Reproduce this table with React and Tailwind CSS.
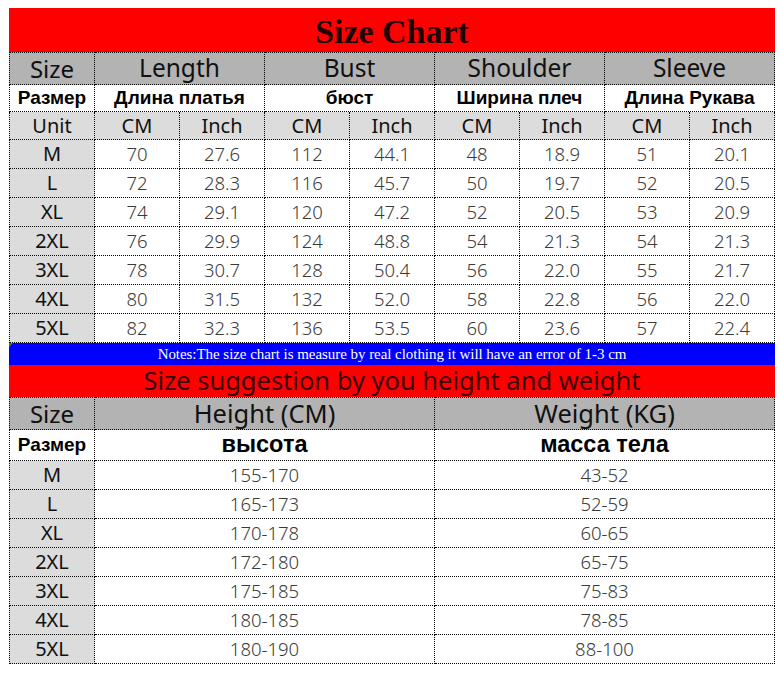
import React from "react";

const sizes = ["M", "L", "XL", "2XL", "3XL", "4XL", "5XL"];

const chart = [
    ["70", "27.6", "112", "44.1", "48", "18.9", "51", "20.1"],
    ["72", "28.3", "116", "45.7", "50", "19.7", "52", "20.5"],
    ["74", "29.1", "120", "47.2", "52", "20.5", "53", "20.9"],
    ["76", "29.9", "124", "48.8", "54", "21.3", "54", "21.3"],
    ["78", "30.7", "128", "50.4", "56", "22.0", "55", "21.7"],
    ["80", "31.5", "132", "52.0", "58", "22.8", "56", "22.0"],
    ["82", "32.3", "136", "53.5", "60", "23.6", "57", "22.4"],
];

const suggestion = [
    ["155-170", "43-52"],
    ["165-173", "52-59"],
    ["170-178", "60-65"],
    ["172-180", "65-75"],
    ["175-185", "75-83"],
    ["180-185", "78-85"],
    ["180-190", "88-100"],
];

const groups = [
    { en: "Length", ru: "Длина платья" },
    { en: "Bust", ru: "бюст" },
    { en: "Shoulder", ru: "Ширина плеч" },
    { en: "Sleeve", ru: "Длина Рукава" },
];

const cell = "flex items-center justify-center border-r border-b border-dotted border-black";
const sans = "font-['Noto_Sans',sans-serif]";
const arial = "font-['Liberation_Sans',Arial,sans-serif]";

const App = () => {
    return (
        <div className="w-[780px] h-[677px] bg-white pt-2 pl-[9px]">
            <div className="w-[766px]">
                {/* title */}
                <div className="h-[44px] bg-[#ff0000] flex items-center justify-center pt-[3px]">
                    <span className="font-['Liberation_Serif',serif] font-bold text-[34px] text-[#1e0000] leading-none">Size Chart</span>
                </div>

                {/* size chart */}
                <div className={`grid grid-cols-[86px_repeat(8,85px)] ${sans}`}>
                    <div className={`${cell} border-l border-t h-[33px] bg-[#b3b3b3] text-[24px] text-[#111]`}>Size</div>
                    {groups.map(g => (
                        <div key={g.en} className={`${cell} col-span-2 border-t h-[33px] bg-[#b3b3b3] text-[24.5px] text-[#111]`}>{g.en}</div>
                    ))}

                    <div className={`${cell} border-l h-[27px] bg-white ${arial} font-bold text-[19px] text-black`}>Размер</div>
                    {groups.map(g => (
                        <div key={g.ru} className={`${cell} col-span-2 h-[27px] bg-white ${arial} font-bold text-[19px] text-black`}>{g.ru}</div>
                    ))}

                    <div className={`${cell} border-l h-[28px] bg-[#dcdcdc] text-[20px] text-[#111]`}>Unit</div>
                    {groups.map(g => (
                        <React.Fragment key={g.en + "u"}>
                            <div className={`${cell} h-[28px] bg-[#dcdcdc] text-[20px] text-[#111]`}>CM</div>
                            <div className={`${cell} h-[28px] bg-[#dcdcdc] text-[20px] text-[#111]`}>Inch</div>
                        </React.Fragment>
                    ))}

                    {sizes.map((s, i) => (
                        <React.Fragment key={s}>
                            <div className={`${cell} border-l h-[29px] bg-[#dcdcdc] text-[20px] text-[#111]`}>{s}</div>
                            {chart[i].map((v, j) => (
                                <div key={j} className={`${cell} h-[29px] bg-white text-[18.5px] font-light text-[#3a3a3a]`}>{v}</div>
                            ))}
                        </React.Fragment>
                    ))}
                </div>

                {/* notes */}
                <div className="relative h-[22px] bg-[#0000ff] flex items-center justify-center">
                    <div className="absolute left-0 top-0 w-0 h-0 border-t-[4px] border-t-[#2e8b2e] border-r-[4px] border-r-transparent"></div>
                    <span className="font-['Liberation_Serif',serif] text-[15px] tracking-[-0.05px] text-white leading-none">Notes:The size chart is measure by real clothing it will have an error of 1-3 cm</span>
                </div>

                {/* suggestion title */}
                <div className="h-[32px] bg-[#ff0000] flex items-center justify-center">
                    <span className={`${sans} text-[25.5px] text-[#3a0000] leading-none`}>Size suggestion by you height and weight</span>
                </div>

                {/* suggestion table */}
                <div className={`grid grid-cols-[86px_340px_340px] ${sans}`}>
                    <div className={`${cell} border-l border-t h-[33px] bg-[#b3b3b3] text-[24px] text-[#111]`}>Size</div>
                    <div className={`${cell} border-t h-[33px] bg-[#b3b3b3] text-[25.5px] text-[#111]`}>Height (CM)</div>
                    <div className={`${cell} border-t h-[33px] bg-[#b3b3b3] text-[25.5px] text-[#111]`}>Weight (KG)</div>

                    <div className={`${cell} border-l h-[31px] bg-white ${arial} font-bold text-[19px] text-black`}>Размер</div>
                    <div className={`${cell} h-[31px] bg-white ${arial} font-bold text-[23.5px] text-black`}>высота</div>
                    <div className={`${cell} h-[31px] bg-white ${arial} font-bold text-[23.5px] text-black`}>масса тела</div>

                    {sizes.map((s, i) => (
                        <React.Fragment key={s + "b"}>
                            <div className={`${cell} border-l h-[29px] bg-[#dcdcdc] text-[20px] text-[#111]`}>{s}</div>
                            <div className={`${cell} h-[29px] bg-white text-[18.5px] font-light text-[#3a3a3a]`}>{suggestion[i][0]}</div>
                            <div className={`${cell} h-[29px] bg-white text-[18.5px] font-light text-[#3a3a3a]`}>{suggestion[i][1]}</div>
                        </React.Fragment>
                    ))}
                </div>
            </div>
        </div>
    );
};

export default App;
